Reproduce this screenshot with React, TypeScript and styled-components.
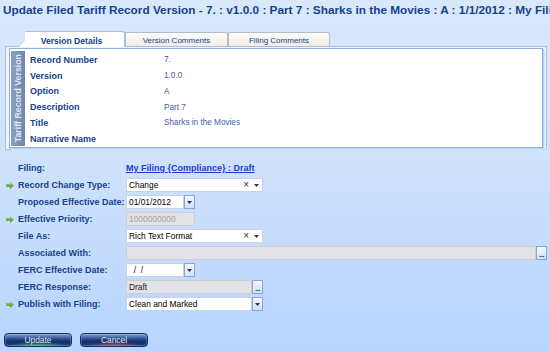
import React from "react";
import styled, { createGlobalStyle } from "styled-components";

const Global = createGlobalStyle`
  html, body { margin: 0; padding: 0; }
  body {
    font-family: "Liberation Sans", Arial, sans-serif;
    background: #c4dcfc;
    overflow: hidden;
  }
`;

const Page = styled.div`
  width: 550px;
  height: 351px;
  box-sizing: border-box;
  display: flex;
  flex-direction: column;
  background: linear-gradient(#d9e8fb 0%, #cfe2fc 45%, #b8d5fe 100%);
  overflow: hidden;
`;

const Title = styled.h1`
  margin: 0;
  padding: 3px 0 0 3px;
  font-size: 11.8px;
  line-height: 14px;
  font-weight: bold;
  color: #15428b;
  white-space: nowrap;
  overflow: hidden;
`;

const TabStrip = styled.div`
  display: flex;
  align-items: flex-end;
  height: 16px;
  margin: 14px 0 -1px 25px;
  position: relative;
  z-index: 1;
`;

const Tab = styled.div<{ $active?: boolean; $w: number }>`
  position: relative;
  box-sizing: border-box;
  width: ${(p) => p.$w}px;
  height: ${(p) => (p.$active ? 16 : 15)}px;
  display: flex;
  align-items: center;
  justify-content: center;
  font-size: ${(p) => (p.$active ? "8.6px" : "8px")};
  font-weight: ${(p) => (p.$active ? "bold" : "normal")};
  color: #15428b;
  background: ${(p) =>
    p.$active ? "#ffffff" : "linear-gradient(#fdfcf9, #efede6)"};
  border: 1px solid ${(p) => (p.$active ? "#a9bfdc" : "#b3bccb")};
  border-bottom: ${(p) => (p.$active ? "none" : "1px solid #a9bfdc")};
  border-left: ${(p) => (p.$active ? "none" : "1px solid #b3bccb")};
  border-radius: 0 3px 0 0;
  padding-top: ${(p) => (p.$active ? "2px" : "1px")};
  padding-right: ${(p) => (p.$active ? "6px" : "0")};
  ${(p) =>
    p.$active
      ? `
    &::before {
      content: "";
      position: absolute;
      left: -7px;
      top: -1px;
      bottom: 0;
      width: 16px;
      background: #ffffff;
      border-left: 1px solid #a9bfdc;
      border-top: 1px solid #a9bfdc;
      border-radius: 3px 0 0 0;
      transform: skewX(-40deg);
      transform-origin: bottom left;
      z-index: -1;
    }
  `
      : ""}
`;

const Panel = styled.div`
  margin: 0 3px 0 5px;
  height: 104px;
  box-sizing: border-box;
  border: 1px solid #a6c1e6;
  background: #eef4fd;
  padding: 1px 3px 1px 3px;
  display: flex;
`;

const PanelInner = styled.div`
  flex: 1;
  display: flex;
  background: #ffffff;
  border: 1px solid #8fb1e0;
  box-shadow: 1px 1px 0 #b8cfef, 2px 2px 0 #d6e4f7;
  padding: 2px 0 1px 1px;
`;

const SideBar = styled.div`
  width: 14px;
  background: linear-gradient(90deg, #8aa0c2, #6f87ae);
  display: flex;
  align-items: center;
  justify-content: center;
`;

const SideText = styled.span`
  writing-mode: vertical-rl;
  transform: rotate(180deg);
  font-size: 8.8px;
  font-weight: bold;
  color: #e3e9f2;
  white-space: nowrap;
  line-height: 14px;
`;

const InfoGrid = styled.div`
  flex: 1;
  display: grid;
  grid-template-columns: 134px 1fr;
  grid-auto-rows: 15.75px;
  align-content: start;
  align-items: center;
  padding: 1px 0 0 5px;
`;

const InfoLabel = styled.div`
  font-size: 9px;
  font-weight: bold;
  color: #15428b;
  white-space: nowrap;
`;

const InfoValue = styled.div`
  font-size: 8.2px;
  color: #3f60a2;
  white-space: nowrap;
`;

const Form = styled.div`
  display: grid;
  grid-template-columns: 18px 108px 1fr;
  grid-auto-rows: 14px;
  row-gap: 3px;
  margin: 11px 3px 0 0;
  align-items: center;
`;

const Marker = styled.div`
  display: flex;
  justify-content: flex-end;
  align-items: center;
  padding-right: 4px;
  height: 14px;
`;

const Label = styled.div`
  font-size: 9px;
  font-weight: bold;
  color: #15428b;
  white-space: nowrap;
`;

const Field = styled.div`
  display: flex;
  align-items: center;
  height: 14px;
`;

const LinkText = styled.a`
  font-size: 9px;
  font-weight: bold;
  color: #1e3cd2;
  text-decoration: underline;
  white-space: nowrap;
  cursor: pointer;
`;

const Box = styled.div<{ $w?: number; $tone?: "white" | "gray" }>`
  box-sizing: border-box;
  height: 14px;
  ${(p) => (p.$w ? `width: ${p.$w}px; flex: none;` : "flex: 1;")}
  background: ${(p) => (p.$tone === "gray" ? "#e3e2e7" : "#ffffff")};
  border: 1px solid ${(p) => (p.$tone === "gray" ? "#cdcdd3" : "#c6d3e4")};
  display: flex;
  align-items: center;
  padding: 0 3px 0 2px;
  font-size: 8.4px;
  color: ${(p) => (p.$tone === "gray" ? "#222" : "#000")};
  white-space: nowrap;
  overflow: hidden;
`;

const Muted = styled.span`
  color: #a3a3a8;
`;

const BoxText = styled.span`
  flex: 1;
`;

const Clear = styled.span`
  font-size: 10px;
  color: #333;
  margin-right: 5px;
  line-height: 10px;
`;

const SmallButton = styled.div`
  box-sizing: border-box;
  width: 11px;
  height: 14px;
  flex: none;
  border: 1px solid #86a6d3;
  background: linear-gradient(#f4f8fe, #cfe0f7);
  display: flex;
  align-items: center;
  justify-content: center;
`;

const Dots = styled.span`
  font-size: 8px;
  font-weight: bold;
  color: #1d3f80;
  line-height: 8px;
  margin-top: 3px;
  letter-spacing: -0.5px;
`;

const ButtonBar = styled.div`
  display: flex;
  gap: 8px;
  margin: 22px 0 0 4px;
`;

const ActionButton = styled.button<{ $glow: string }>`
  box-sizing: border-box;
  width: 68px;
  height: 14px;
  padding: 0;
  border: 1px solid #123068;
  border-radius: 4px;
  font-family: "Liberation Sans", Arial, sans-serif;
  font-size: 8.4px;
  line-height: 12px;
  color: #e6edf8;
  text-shadow: 0 0 1px #0b2050;
  background:
    radial-gradient(ellipse 45% 35% at 50% 100%, ${(p) => p.$glow}, transparent),
    linear-gradient(#8ea6cf 0%, #4f70aa 25%, #1b3c7c 50%, #10306c 70%, #1f4386 100%);
  box-shadow: inset 0 0 0 1px rgba(150, 180, 225, 0.35);
  cursor: pointer;
`;

const Arrow = () => (
  <svg width="8" height="7" viewBox="0 0 8 7">
    <defs>
      <linearGradient id="garrow" x1="0" y1="0" x2="0" y2="1">
        <stop offset="0" stopColor="#a6d874" />
        <stop offset="1" stopColor="#3f8d24" />
      </linearGradient>
    </defs>
    <path d="M0 2h4V0l4 3.5L4 7V5H0z" fill="url(#garrow)" />
  </svg>
);

const Caret = () => (
  <svg width="5" height="3" viewBox="0 0 5 3">
    <path d="M0 0h5L2.5 3z" fill="#27374f" />
  </svg>
);

const DropButton = () => (
  <SmallButton>
    <Caret />
  </SmallButton>
);

const EllipsisButton = () => (
  <SmallButton>
    <Dots>...</Dots>
  </SmallButton>
);

const Combo = ({ value }: { value: string }) => (
  <Box $w={137}>
    <BoxText>{value}</BoxText>
    <Clear>×</Clear>
    <Caret />
  </Box>
);

const info: [string, string][] = [
  ["Record Number", "7."],
  ["Version", "1.0.0"],
  ["Option", "A"],
  ["Description", "Part 7"],
  ["Title", "Sharks in the Movies"],
  ["Narrative Name", ""],
];

const FormRow = ({
  required,
  label,
  children,
}: {
  required?: boolean;
  label: string;
  children: React.ReactNode;
}) => (
  <>
    <Marker>{required ? <Arrow /> : null}</Marker>
    <Label>{label}</Label>
    <Field>{children}</Field>
  </>
);

export default function App() {
  return (
    <Page>
      <Global />
      <Title>
        Update Filed Tariff Record Version - 7. : v1.0.0 : Part 7 : Sharks in the
        Movies : A : 1/1/2012 : My Filing {"{Compliance}"} : Draft
      </Title>
      <TabStrip>
        <Tab $active $w={100}>Version Details</Tab>
        <Tab $w={103}>Version Comments</Tab>
        <Tab $w={102}>Filing Comments</Tab>
      </TabStrip>
      <Panel>
        <PanelInner>
          <SideBar>
            <SideText>Tariff Record Version</SideText>
          </SideBar>
          <InfoGrid>
            {info.map(([k, v]) => (
              <React.Fragment key={k}>
                <InfoLabel>{k}</InfoLabel>
                <InfoValue>{v}</InfoValue>
              </React.Fragment>
            ))}
          </InfoGrid>
        </PanelInner>
      </Panel>
      <Form>
        <FormRow label="Filing:">
          <LinkText>My Filing {"{Compliance}"} : Draft</LinkText>
        </FormRow>
        <FormRow required label="Record Change Type:">
          <Combo value="Change" />
        </FormRow>
        <FormRow label="Proposed Effective Date:">
          <Box $w={58}>01/01/2012</Box>
          <DropButton />
        </FormRow>
        <FormRow required label="Effective Priority:">
          <Box $w={69} $tone="gray">
            <Muted>1000000000</Muted>
          </Box>
        </FormRow>
        <FormRow label="File As:">
          <Combo value="Rich Text Format" />
        </FormRow>
        <FormRow label="Associated With:">
          <Box $tone="gray" />
          <EllipsisButton />
        </FormRow>
        <FormRow label="FERC Effective Date:">
          <Box $w={58}>&nbsp;&nbsp;/&nbsp;&nbsp;/</Box>
          <DropButton />
        </FormRow>
        <FormRow label="FERC Response:">
          <Box $w={126} $tone="gray">Draft</Box>
          <EllipsisButton />
        </FormRow>
        <FormRow required label="Publish with Filing:">
          <Box $w={126}>Clean and Marked</Box>
          <DropButton />
        </FormRow>
      </Form>
      <ButtonBar>
        <ActionButton $glow="rgba(70, 200, 110, 0.95)">Update</ActionButton>
        <ActionButton $glow="rgba(200, 80, 90, 0.9)">Cancel</ActionButton>
      </ButtonBar>
    </Page>
  );
}
